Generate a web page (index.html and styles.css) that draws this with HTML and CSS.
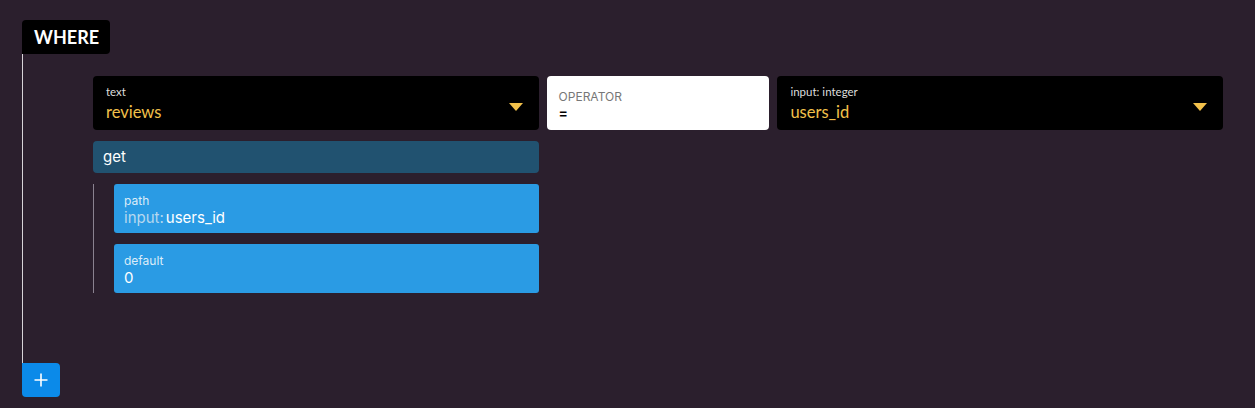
FILE: index.html
```html
<!DOCTYPE html>
<html lang="en">
<head>
  <meta charset="UTF-8" />
  <title>Where clause</title>
  <link rel="stylesheet" href="styles.css">
</head>
<body>
  <div class="where">
    <div class="tag">WHERE</div>
    <div class="clause">
      <div class="row">
        <div class="select">
          <div class="select-text">
            <span class="label">text</span>
            <span class="value">reviews</span>
          </div>
          <span class="caret"></span>
        </div>
        <div class="operator">
          <span class="op-label">OPERATOR</span>
          <span class="op-value">=</span>
        </div>
        <div class="select">
          <div class="select-text">
            <span class="label">input: integer</span>
            <span class="value">users_id</span>
          </div>
          <span class="caret"></span>
        </div>
        <div class="filter">
          <div class="filter-name">get</div>
          <div class="args">
            <div class="arg">
              <span class="arg-label">path</span>
              <span class="arg-value"><span class="prefix">input:</span>users_id</span>
            </div>
            <div class="arg">
              <span class="arg-label">default</span>
              <span class="arg-value">0</span>
            </div>
          </div>
        </div>
      </div>
    </div>
    <button class="add">
      <svg width="16" height="16" viewBox="0 0 16 16"><path d="M8 1.5v13M1.5 8h13" stroke="#fff" stroke-width="1.6" fill="none"/></svg>
    </button>
  </div>
</body>
</html>
```

FILE: styles.css
```css
body {
  margin: 0;
  background: #2b1f2d;
  font-family: "Inter", sans-serif;
  height: 408px;
}
.where {
  padding: 20px 32px 0 22px;
}
.tag {
  display: inline-block;
  background: #000;
  color: #fff;
  font-family: "Lato", sans-serif;
  font-weight: bold;
  font-size: 18px;
  line-height: 34px;
  padding: 0 11px 0 12px;
  border-radius: 4px 4px 4px 0;
}
.clause {
  border-left: 1px solid #d8d4d8;
  padding: 22px 0 70px 70px;
}
.row {
  display: grid;
  grid-template-columns: 2fr 1fr 2fr;
  column-gap: 8px;
  row-gap: 11px;
}
.select {
  background: #000;
  border-radius: 4px;
  height: 54px;
  box-sizing: border-box;
  padding: 9px 16px 0 13px;
  display: flex;
  justify-content: space-between;
  align-items: center;
  font-family: "Lato", sans-serif;
}
.select-text {
  display: flex;
  flex-direction: column;
  align-self: flex-start;
}
.label {
  color: #ddd;
  font-size: 11.5px;
  line-height: 14px;
}
.value {
  color: #f2c14b;
  font-size: 16.5px;
  line-height: 22px;
  margin-top: 2px;
}
.caret {
  width: 0;
  height: 0;
  border-left: 7px solid transparent;
  border-right: 7px solid transparent;
  border-top: 8px solid #f2c14b;
  margin-top: -1px;
}
.operator {
  background: #fff;
  border-radius: 4px;
  height: 54px;
  box-sizing: border-box;
  padding: 13px 12px 0;
  display: flex;
  flex-direction: column;
}
.op-label {
  color: #777;
  font-size: 12px;
  line-height: 16px;
}
.op-value {
  color: #000;
  font-size: 14px;
  font-weight: 600;
  line-height: 16px;
}
.filter {
  grid-column: 1;
}
.filter-name {
  background: #215270;
  color: #fff;
  font-size: 15px;
  line-height: 32px;
  padding: 0 10px;
  border-radius: 4px;
}
.args {
  margin-top: 11px;
  border-left: 1px solid #8a8290;
  padding-left: 20px;
  display: flex;
  flex-direction: column;
  gap: 11px;
}
.arg {
  background: #2a9be4;
  border-radius: 3px;
  height: 49px;
  box-sizing: border-box;
  padding: 10px 10px 0;
  display: flex;
  flex-direction: column;
}
.arg-label {
  color: #dcecf8;
  font-size: 12px;
  line-height: 14px;
}
.arg-value {
  color: #fff;
  font-size: 15px;
  line-height: 20px;
}
.prefix {
  color: #b6d8ef;
  margin-right: 2px;
}
.add {
  display: flex;
  align-items: center;
  justify-content: center;
  width: 38px;
  height: 34px;
  border: none;
  padding: 0;
  background: #0b8ae9;
  border-radius: 0 4px 4px 4px;
}
```
